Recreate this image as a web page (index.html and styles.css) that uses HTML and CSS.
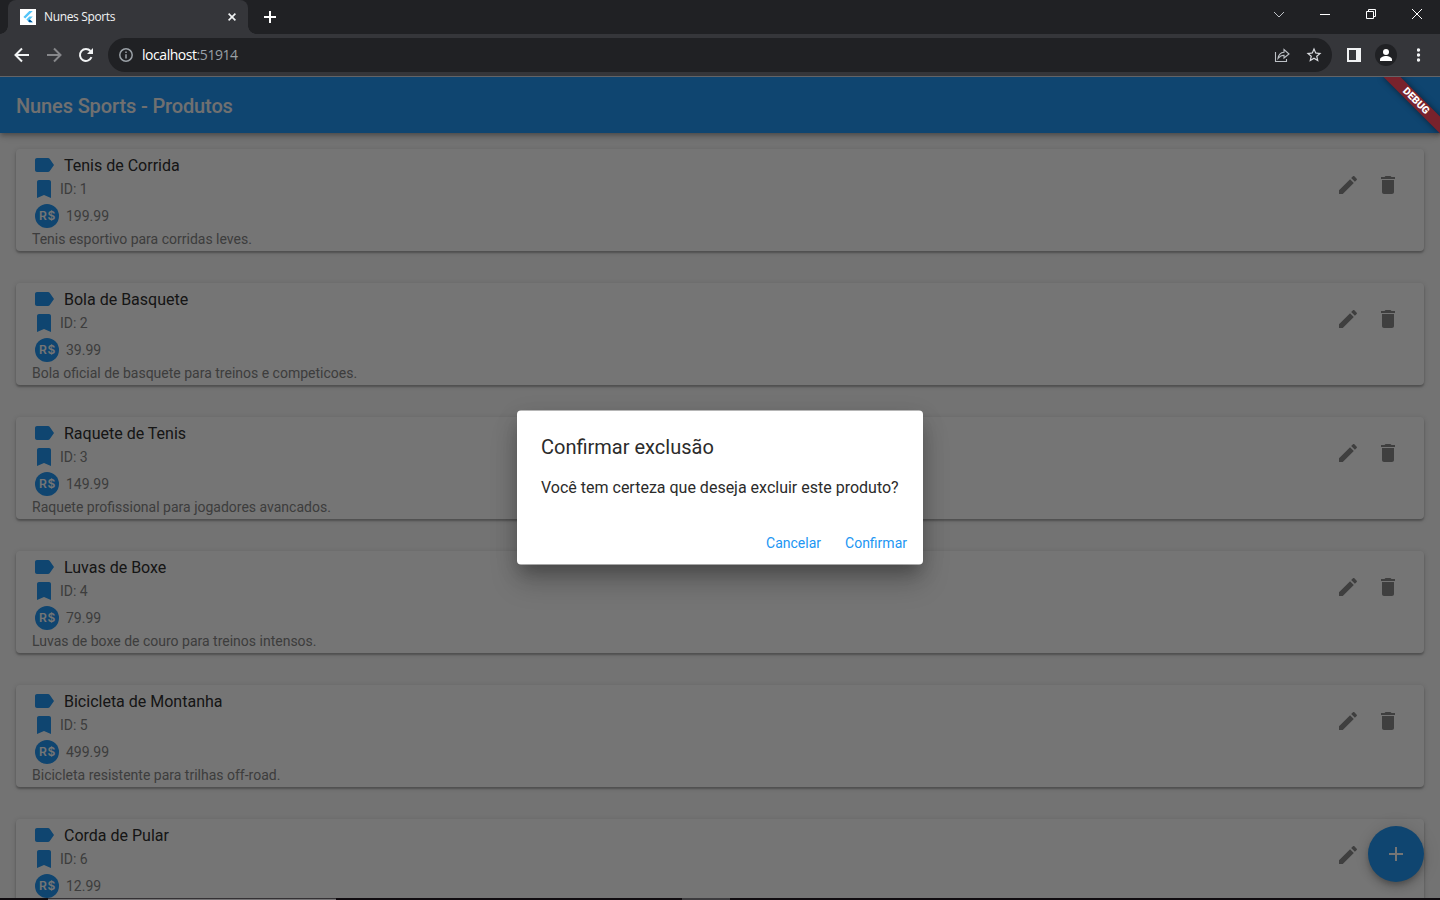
FILE: index.html
```html
<!DOCTYPE html>
<html lang="pt-BR">
<head>
<meta charset="utf-8">
<title>Nunes Sports</title>
<link rel="stylesheet" href="styles.css">
</head>
<body>
<svg class="defs" width="0" height="0">
  <symbol id="label" viewBox="0 0 24 24"><path d="M17.63 5.84C17.27 5.33 16.67 5 16 5L5 5.01C3.9 5.01 3 5.9 3 7v10c0 1.1.9 1.99 2 1.99L16 19c.67 0 1.27-.33 1.63-.84L22 12l-4.37-6.16z"/></symbol>
  <symbol id="bookmark" viewBox="0 0 24 24"><path d="M17 3H7c-1.1 0-1.99.9-1.99 2L5 21l7-3 7 3V5c0-1.1-.9-2-2-2z"/></symbol>
  <symbol id="edit" viewBox="0 0 24 24"><path d="M3 17.25V21h3.75L17.81 9.94l-3.75-3.75L3 17.25zM20.71 7.04c.39-.39.39-1.02 0-1.41l-2.34-2.34c-.39-.39-1.02-.39-1.41 0l-1.83 1.83 3.75 3.75 1.83-1.83z"/></symbol>
  <symbol id="delete" viewBox="0 0 24 24"><path d="M6 19c0 1.1.9 2 2 2h8c1.1 0 2-.9 2-2V7H6v12zM19 4h-3.5l-1-1h-5l-1 1H5v2h14V4z"/></symbol>
</svg>
<div class="window">
  <div class="tabstrip">
    <div class="tab">
      <svg class="favicon" width="16" height="16" viewBox="0 0 16 16"><path fill="#fff" d="M0 0h16v16H0z"/><path fill="#54c5f8" d="M9.3 2h3.5L5.2 9.6 3.4 7.9zM9.3 7.5h3.5l-2.900 2.900 2.900 2.900H9.300L6.400 10.400z"/><path fill="#01579b" d="M8.100 12.100l1.700-1.700 3 2.900H9.300z"/></svg>
      <span class="tab-title">Nunes Sports</span>
      <svg class="tab-close" width="8" height="8" viewBox="0 0 8 8"><path d="M.6.6l6.800 6.800M7.400.6L.6 7.400"/></svg>
    </div>
    <svg class="new-tab" width="12" height="12" viewBox="0 0 12 12"><path d="M6 0v12M0 6h12"/></svg>
    <div class="controls">
      <svg width="46" height="28" viewBox="0 0 46 28"><path d="M18 12l5 5 5-5"/></svg>
      <svg width="46" height="28" viewBox="0 0 46 28"><path d="M18 14.500h10"/></svg>
      <svg width="46" height="28" viewBox="0 0 46 28"><path d="M18.500 11.500h7v7h-7zM20.500 11.500v-2h7v7h-2"/></svg>
      <svg width="46" height="28" viewBox="0 0 46 28"><path d="M18 9l10 10M28 9L18 19"/></svg>
    </div>
  </div>
  <div class="toolbar">
    <div class="nav">
      <svg width="16" height="16" viewBox="0 0 16 16"><path d="M15 8H2M8 1.500L1.500 8 8 14.500"/></svg>
      <svg class="dim" width="16" height="16" viewBox="0 0 16 16"><path d="M1 8h13M8 1.500L14.500 8 8 14.500"/></svg>
      <svg width="16" height="16" viewBox="0 0 16 16"><path d="M13.500 10.200A6 6 0 1 1 12.500 4"/><path class="solid" d="M15 1v6H9z"/></svg>
    </div>
    <div class="omnibox">
      <svg class="info" width="14" height="14" viewBox="0 0 14 14"><circle cx="7" cy="7" r="6.200"/><path d="M7 6.200v4.300M7 3.500v1.500"/></svg>
      <span class="url"><b>localhost</b>:51914</span>
      <svg class="share" width="16" height="16" viewBox="0 0 16 16"><path d="M1.500 5v9.500h11V12M4 11.500C4.500 7.500 6.500 5.500 10 5.200V2.500l5 4.500-5 4V8.300C7.500 8.300 6 9 4 11.500z"/></svg>
      <svg class="star" width="18" height="18" viewBox="0 0 24 24"><path d="M22 9.240l-7.190-.62L12 2 9.190 8.630 2 9.240l5.460 4.730L5.820 21 12 17.270 18.180 21l-1.630-7.030L22 9.240zM12 15.400l-3.760 2.270 1-4.280-3.320-2.880 4.380-.38L12 6.100l1.710 4.040 4.380.38-3.320 2.880 1 4.280L12 15.400z"/></svg>
    </div>
    <svg class="panel" width="14" height="14" viewBox="0 0 14 14"><path fill-rule="evenodd" d="M0 0h14v14H0zM2 2v10h7V2z"/></svg>
    <svg class="avatar" width="22" height="22" viewBox="0 0 22 22"><circle class="disc" cx="11" cy="11" r="11"/><circle cx="11" cy="8" r="3"/><path d="M5 17v-1.500c0-2.200 3.500-3.500 6-3.500s6 1.300 6 3.500V17z"/></svg>
    <svg class="more" width="4" height="14" viewBox="0 0 4 14"><circle cx="1.500" cy="2" r="1.700"/><circle cx="1.500" cy="7" r="1.700"/><circle cx="1.500" cy="12" r="1.700"/></svg>
  </div>
  <main class="app">
    <header class="appbar">Nunes Sports - Produtos</header>
    <div class="list">
      <article class="card">
        <div class="details">
          <div class="row name"><svg><use href="#label"/></svg>Tenis de Corrida</div>
          <div class="row id"><svg><use href="#bookmark"/></svg>ID: 1</div>
          <div class="row price"><span class="coin">R$</span>199.99</div>
          <div class="desc">Tenis esportivo para corridas leves.</div>
        </div>
        <div class="actions"><svg><use href="#edit"/></svg><svg><use href="#delete"/></svg></div>
      </article>
      <article class="card">
        <div class="details">
          <div class="row name"><svg><use href="#label"/></svg>Bola de Basquete</div>
          <div class="row id"><svg><use href="#bookmark"/></svg>ID: 2</div>
          <div class="row price"><span class="coin">R$</span>39.99</div>
          <div class="desc">Bola oficial de basquete para treinos e competicoes.</div>
        </div>
        <div class="actions"><svg><use href="#edit"/></svg><svg><use href="#delete"/></svg></div>
      </article>
      <article class="card">
        <div class="details">
          <div class="row name"><svg><use href="#label"/></svg>Raquete de Tenis</div>
          <div class="row id"><svg><use href="#bookmark"/></svg>ID: 3</div>
          <div class="row price"><span class="coin">R$</span>149.99</div>
          <div class="desc">Raquete profissional para jogadores avancados.</div>
        </div>
        <div class="actions"><svg><use href="#edit"/></svg><svg><use href="#delete"/></svg></div>
      </article>
      <article class="card">
        <div class="details">
          <div class="row name"><svg><use href="#label"/></svg>Luvas de Boxe</div>
          <div class="row id"><svg><use href="#bookmark"/></svg>ID: 4</div>
          <div class="row price"><span class="coin">R$</span>79.99</div>
          <div class="desc">Luvas de boxe de couro para treinos intensos.</div>
        </div>
        <div class="actions"><svg><use href="#edit"/></svg><svg><use href="#delete"/></svg></div>
      </article>
      <article class="card">
        <div class="details">
          <div class="row name"><svg><use href="#label"/></svg>Bicicleta de Montanha</div>
          <div class="row id"><svg><use href="#bookmark"/></svg>ID: 5</div>
          <div class="row price"><span class="coin">R$</span>499.99</div>
          <div class="desc">Bicicleta resistente para trilhas off-road.</div>
        </div>
        <div class="actions"><svg><use href="#edit"/></svg><svg><use href="#delete"/></svg></div>
      </article>
      <article class="card">
        <div class="details">
          <div class="row name"><svg><use href="#label"/></svg>Corda de Pular</div>
          <div class="row id"><svg><use href="#bookmark"/></svg>ID: 6</div>
          <div class="row price"><span class="coin">R$</span>12.99</div>
        </div>
        <div class="actions"><svg><use href="#edit"/></svg><svg><use href="#delete"/></svg></div>
      </article>
    </div>
    <div class="fab"><svg width="14" height="14" viewBox="0 0 14 14"><path d="M6 0h2v6h6v2H8v6H6V8H0V6h6z"/></svg></div>
    <div class="barrier">
      <section class="dialog">
        <h2>Confirmar exclusão</h2>
        <p>Você tem certeza que deseja excluir este produto?</p>
        <div class="buttons"><span>Cancelar</span><span>Confirmar</span></div>
      </section>
    </div>
    <div class="debug">DEBUG</div>
  </main>
  <footer class="taskbar"><i class="open"></i><i class="active"></i></footer>
</div>
</body>
</html>
```
FILE: styles.css
```css
* { box-sizing: border-box; }
body { margin: 0; font-family: Roboto, "Liberation Sans", sans-serif; }
svg { display: block; flex: none; }
.defs { position: absolute; }
.window { width: 1440px; height: 900px; display: flex; flex-direction: column; overflow: hidden; }

.tabstrip { height: 34px; flex: none; display: flex; background: #202124; padding-left: 8px; }
.tab { position: relative; width: 240px; height: 34px; background: #35363a; border-radius: 8px 8px 0 0; display: flex; align-items: center; padding: 0 12px; }
.tab::before, .tab::after { content: ""; position: absolute; bottom: 0; width: 8px; height: 8px; }
.tab::before { left: -8px; background: radial-gradient(circle at 0 0, #202124 7.5px, #35363a 8px); }
.tab::after { right: -8px; background: radial-gradient(circle at 100% 0, #202124 7.5px, #35363a 8px); }
.tab-title { flex: 1; margin-left: 8px; color: #f1f3f4; font: 12px/16px "Open Sans", "Noto Sans", sans-serif; letter-spacing: -.35px; }
.tab-close { stroke: #f1f3f4; stroke-width: 1.6; }
.new-tab { margin: 11px 0 0 16px; stroke: #fff; stroke-width: 2; }
.controls { display: flex; margin-left: auto; }
.controls svg { fill: none; stroke: #fff; stroke-width: 1; }
.controls svg:first-child { stroke: #bdc1c6; }

.toolbar { height: 43px; flex: none; display: flex; align-items: center; background: #35363a; border-bottom: 1px solid #636467; padding: 0 19px 0 14px; }
.nav { display: flex; gap: 16px; }
.nav svg { fill: none; stroke: #f1f3f4; stroke-width: 2; }
.nav .dim { stroke: #86878a; }
.nav .solid { fill: #f1f3f4; stroke: none; }
.omnibox { width: 1224px; flex: none; height: 34px; margin-left: 14px; border-radius: 17px; background: #202124; display: flex; align-items: center; padding: 0 9px 0 11px; }
.info { fill: none; stroke: #9aa0a6; stroke-width: 1.5; }
.url { flex: 1; margin-left: 9px; color: #9aa0a6; font: 14px/20px "Open Sans", "Noto Sans", sans-serif; letter-spacing: -.45px; }
.url b { font-weight: 400; color: #fff; }
.share { fill: none; stroke: #bdc1c6; stroke-width: 1.1; margin-right: 15px; }
.star { fill: #dadce0; }
.panel { margin-left: 15px; fill: #f1f3f4; }
.avatar { margin-left: 14px; margin-right: 20px; fill: #fff; width: 22px; }
.avatar .disc { fill: #202124; }
.more { fill: #f1f3f4; }

.app { position: relative; height: 821px; flex: none; background: #fafafa; overflow: hidden; display: flex; flex-direction: column; }
.appbar { position: relative; height: 56px; flex: none; background: #2196f3; color: #f4f4f4; font-size: 20px; font-weight: 500; letter-spacing: -.13px; line-height: 56px; padding: 1px 0 0 16px; box-shadow: 0 2px 4px -1px rgba(0,0,0,.2), 0 4px 5px rgba(0,0,0,.14), 0 1px 10px rgba(0,0,0,.12); }
.list { padding: 16px; display: flex; flex-direction: column; gap: 32px; }
.card { height: 102px; flex: none; background: #fff; border-radius: 4px; display: flex; justify-content: space-between; padding: 4px 24px 0 16px; box-shadow: 0 2px 2px rgba(0,0,0,.24), 0 1px 5px rgba(0,0,0,.16); }
.row { display: flex; align-items: center; height: 24px; }
.row svg { width: 24px; height: 24px; fill: #2196f3; }
.name { font-size: 16px; gap: 8px; color: #303030; }
.id { font-size: 14px; gap: 4px; color: #858585; }
.price { font-size: 14px; height: 30px; gap: 7px; padding-left: 3px; color: #858585; }
.coin { width: 24px; height: 24px; border-radius: 50%; background: #2196f3; color: #fff; font: 600 12px/24px Inter, Roboto, sans-serif; letter-spacing: .7px; text-align: center; padding-left: 1px; }
.desc { font-size: 14px; line-height: 16px; color: #858585; }
.actions { display: flex; gap: 16px; padding-top: 20px; }
.actions svg { width: 24px; height: 24px; fill: #8a8a8a; }

.fab { position: absolute; right: 16px; bottom: 16px; width: 56px; height: 56px; border-radius: 50%; background: #2196f3; display: flex; align-items: center; justify-content: center; box-shadow: 0 3px 5px -1px rgba(0,0,0,.2), 0 6px 10px rgba(0,0,0,.14), 0 1px 18px rgba(0,0,0,.12); }
.fab svg { fill: #fff; }
.barrier { position: absolute; inset: 0; background: rgba(0,0,0,.54); display: flex; align-items: center; justify-content: center; }
.dialog { width: 406px; height: 154px; background: #fff; border-radius: 4px; padding: 24px 8px 0 24px; display: flex; flex-direction: column; transform: translateY(-.5px); box-shadow: 0 11px 15px -5px rgba(0,0,0,.2), 0 18px 28px rgba(0,0,0,.18), 0 6px 24px rgba(0,0,0,.1); }
.dialog h2 { margin: 0; font-size: 20px; font-weight: 400; line-height: 24px; color: #2b2b2b; }
.dialog p { margin: 19px 0 0; font-size: 16px; line-height: 19px; color: #2b2b2b; white-space: nowrap; }
.buttons { margin-top: 28px; display: flex; justify-content: flex-end; gap: 8px; }
.buttons span { padding: 0 8px; height: 36px; line-height: 36px; font-size: 14px; color: #2196f3; }
.debug { position: absolute; top: 18px; right: -16px; width: 80px; height: 12px; transform: rotate(45deg); background: #79222c; color: #fff; font-size: 10.2px; font-weight: 900; line-height: 12px; text-align: center; box-shadow: 0 0 6px rgba(0,0,0,.5); }

.taskbar { height: 2px; flex: none; display: flex; background: #100c10; padding-left: 48px; }
.open { width: 288px; background: linear-gradient(#343134 50%, #757375 50%); }
.active { width: 48px; margin-left: 346px; background: #3d3c3f; }
```
